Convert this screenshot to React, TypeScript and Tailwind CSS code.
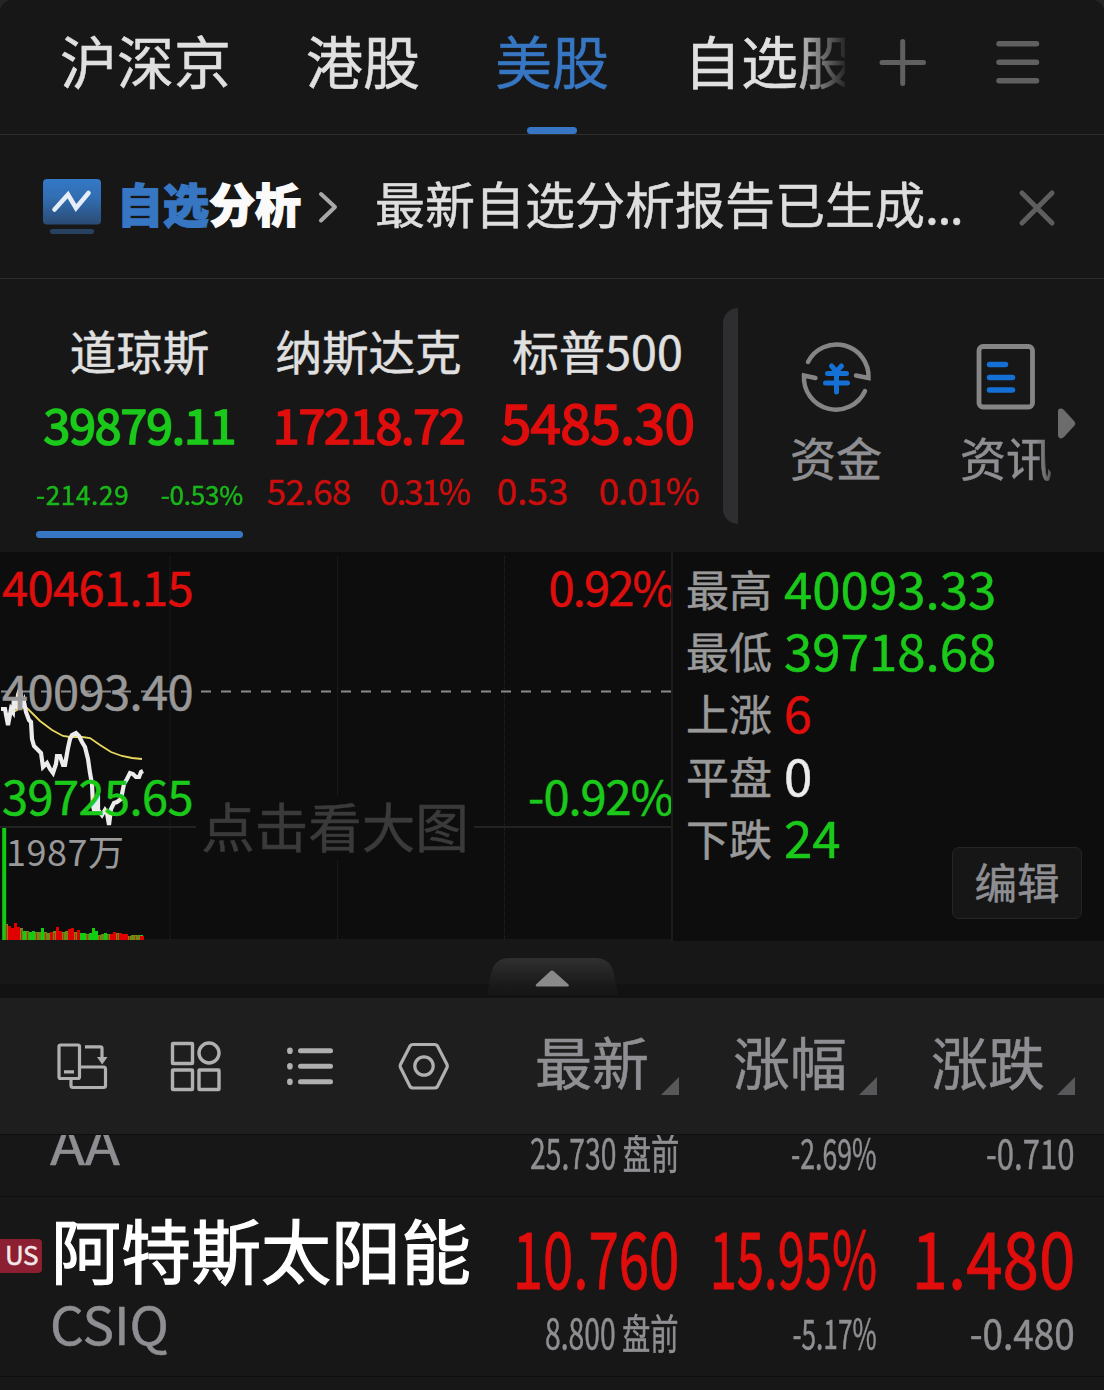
import React from 'react';
import { clsx } from 'clsx';

const UP = 'text-[#e00d0d]';
const DOWN = 'text-[#1ac91a]';

const tabs = ['沪深京', '港股', '美股', '自选股'];

const indices = [
    {
        name: '道琼斯',
        value: '39879.11',
        change: '-214.29',
        percent: '-0.53%',
        color: DOWN,
        active: true,
        valueClass: 'text-[48px] leading-[92px] tracking-[-1px]',
        rowClass: 'text-[26px] leading-[49px]',
        changeClass: 'tracking-[0.7px]',
        percentClass: 'tracking-[-0.2px]',
    },
    {
        name: '纳斯达克',
        value: '17218.72',
        change: '52.68',
        percent: '0.31%',
        color: UP,
        active: false,
        valueClass: 'text-[48px] leading-[92px] tracking-[-1px]',
        rowClass: 'text-[35px] leading-[42px] px-0.5',
        changeClass: 'tracking-[-0.7px]',
        percentClass: 'tracking-[-2.2px] pr-px',
    },
    {
        name: '标普500',
        value: '5485.30',
        change: '0.53',
        percent: '0.01%',
        color: UP,
        active: false,
        valueClass: 'text-[55px] leading-[86px] tracking-[-0.7px]',
        rowClass: 'text-[37px] leading-[40px] pl-[3px] pr-0.5',
        changeClass: '',
        percentClass: 'tracking-[-1.2px]',
    },
];

const stats = [
    { label: '最高', value: '40093.33', color: DOWN },
    { label: '最低', value: '39718.68', color: DOWN },
    { label: '上涨', value: '6', color: UP },
    { label: '平盘', value: '0', color: 'text-[#ececec]' },
    { label: '下跌', value: '24', color: DOWN },
];

const PRICE =
    '1,157 5,157 8,173 11,157 13,160 14,146 17,157 18,143 20,137 22,156 24,150 26,160 29,168 31,170 32,187 34,194 38,198 41,201 43,215 47,211 50,217 53,221 56,212 57,204 60,204 63,213 65,213 68,196 70,187 72,183 76,181 79,184 82,190 85,195 88,207 90,221 92,232 93,254 95,262 98,243 98,258 102,263 105,258 107,261 109,273 111,257 114,251 117,250 121,247 124,232 127,227 130,221 133,222 136,225 139,225 141,220 143,219';

const AVERAGE =
    '10,162 17,158 23,155 27,156 32,161 40,169 52,178 63,184 70,185 82,185 90,186 100,193 111,200 122,204 132,206 142,207';

// one letter + height per volume bar: r = up, g = down, m = mixed
const volumes =
    'm16 r14 r12 r17 r13 m12 g9 m9 g8 g9 m8 m8 g12 m8 m7 r8 m9 r13 r9 m8 m9 r11 r12 m8 r10 g7 g7 m6 g7 g12 g9 m5 m6 g7 m6 r6 r8 m7 r7 r6 r6 m4 m5 m5 m5 g5'.split(' ');

const barColors: Record<string, string> = { r: '#e00000', g: '#12cc12', m: '#6f8a12' };

const columns = ['最新', '涨幅', '涨跌'];

function TopTabs() {
    return (
        <header className="flex h-[135px] border-b border-[#2d2d2d]">
            <div className="flex w-[845px] shrink-0 gap-[75px] overflow-hidden pl-[60px] [mask-image:linear-gradient(to_right,black_790px,transparent_850px)]">
                {tabs.map((tab) => (
                    <div
                        key={tab}
                        className={clsx(
                            'flex shrink-0 flex-col items-center text-[57px] leading-[119px]',
                            tab === '美股' ? 'text-[#3676c2]' : 'text-[#e0e0e0]',
                        )}
                    >
                        <span className="block h-[127px]">{tab}</span>
                        {tab === '美股' && <span className="block h-[7px] w-[50px] rounded-full bg-[#3676c2]" />}
                    </div>
                ))}
            </div>
            <svg className="mt-[36px] ml-[31px] shrink-0" width="54" height="54" fill="none" stroke="#606060" strokeWidth="5" strokeLinecap="round">
                <path d="M6 26.5h41.5M26.7 5.500v42" />
            </svg>
            <svg className="mt-[36px] ml-[62px] shrink-0" width="52" height="54" fill="none" stroke="#606060" strokeWidth="5.500" strokeLinecap="round">
                <path d="M7 7.800h37.500M7 26.300h37.500M7 44.800h37.500" />
            </svg>
        </header>
    );
}

function ReportBanner() {
    return (
        <section className="flex h-[144px] border-b border-[#2d2d2d] pl-[43px]">
            <svg className="mt-[44px] shrink-0" width="58" height="56" fill="none">
                <defs>
                    <linearGradient id="badge" x1="0" y1="0" x2="0" y2="1">
                        <stop stopColor="#3478c6" />
                        <stop offset=".4" stopColor="#326eb3" />
                        <stop offset="1" stopColor="#2a4b74" />
                    </linearGradient>
                </defs>
                <rect width="58" height="45.500" rx="4" fill="url(#badge)" />
                <rect x="7" y="50" width="44" height="5" rx="2.500" fill="#27415f" />
                <path d="M11.500 30.500 25 15.500 33 29 45.500 14" stroke="#e4edf8" strokeWidth="4.600" strokeLinecap="round" />
            </svg>
            <h2 className="ml-[16px] w-[186px] shrink-0 text-[46px] leading-[135px] font-black whitespace-nowrap text-[#3676c2] [-webkit-text-stroke:1.4px]">
                自选<span className="text-[#fafafa]">分析</span>
            </h2>
            <svg className="mt-[54px] ml-[14px] shrink-0" width="24" height="36" fill="none" stroke="#a8a8a8" strokeWidth="4" strokeLinecap="round" strokeLinejoin="round">
                <path d="M4 5l14 13-14 13.500" />
            </svg>
            <p className="ml-[34px] w-[590px] shrink-0 text-[50px] leading-[135px] whitespace-nowrap text-[#dedede]">
                最新自选分析报告已生成<span className="tracking-[-1.500px]">...</span>
            </p>
            <svg className="mt-[50px] ml-[49px] shrink-0" width="46" height="46" fill="none" stroke="#5e5e5e" strokeWidth="5" strokeLinecap="round">
                <path d="M8 8l30 30M38 8L8 38" />
            </svg>
        </section>
    );
}

function IndexStrip() {
    return (
        <section className="flex h-[273px]">
            <div className="flex gap-[22px] pt-[40px] pl-[36px]">
                {indices.map((item) => (
                    <div key={item.name} className={clsx('flex w-[207px] flex-col items-center whitespace-nowrap', item.color)}>
                        <div className="h-[58px] text-[46.500px] leading-[61px] text-[#e0e0e0]">{item.name}</div>
                        <div className={clsx('h-[92px] [-webkit-text-stroke:1.6px]', item.valueClass)}>{item.value}</div>
                        <div className={clsx('flex h-[62px] w-full justify-between opacity-90', item.rowClass)}>
                            <span className={item.changeClass}>{item.change}</span>
                            <span className={item.percentClass}>{item.percent}</span>
                        </div>
                        {item.active && <div className="h-[7px] w-full rounded-full bg-[#3676c2]" />}
                    </div>
                ))}
            </div>
            <div className="mt-[29px] ml-[22px] h-[216px] w-[15px] shrink-0 rounded-l-[15px] bg-[#2e2e30]" />
            <div className="ml-[52px] flex w-[262px] justify-between pt-[57px] text-[46px] leading-[54px] text-[#8f8f93]">
                <div className="flex w-[92px] flex-col items-center">
                    <svg width="80" height="80" fill="none" strokeLinecap="round">
                        <g stroke="#858585" strokeWidth="4.500">
                            <path d="M12 26A32 32 0 0 1 72.500 42L60 39.500" />
                            <path d="M69 55A32 32 0 0 1 8 39.500L19.500 42" />
                        </g>
                        <path d="M35.500 30l5 5.500 5-5.500M31.500 37.500h19M29.500 47h22M40.500 36v20" stroke="#1470d4" strokeWidth="5" />
                    </svg>
                    <span className="mt-[13px]">资金</span>
                </div>
                <div className="flex w-[92px] flex-col items-center [mask-image:linear-gradient(to_right,black_76px,#0008_92px)]">
                    <svg width="80" height="80" fill="none" strokeLinecap="round">
                        <rect x="13" y="10.500" width="53.500" height="60.500" rx="4" stroke="#858585" strokeWidth="4.800" />
                        <path d="M23.500 28.500h16M23.500 41.500h23M23.500 54h23" stroke="#1470d4" strokeWidth="5.500" />
                    </svg>
                    <span className="mt-[13px]">资讯</span>
                </div>
            </div>
            <svg className="mt-[129px] ml-[6px] shrink-0" width="18" height="31">
                <path d="M0 3Q0 0 3 .5 5 .5 6 2L16.500 13.500Q18 15.500 16.500 17.500L6 29Q4 30.500 2 30.500 0 30 0 27Z" fill="#6c6c6c" />
            </svg>
        </section>
    );
}

function IntradayChart() {
    return (
        <div className="relative h-[387px] w-[671px] shrink-0 bg-[#0d0d0d] text-[47px] leading-[60px] tracking-[-0.6px]">
            <svg width="671" height="388" fill="none" className="absolute top-0 left-0">
                <path d="M170 4v384M337.500 4v384M504.500 4v384" stroke="#262626" strokeDasharray="1 1" />
                <path d="M0 275h671" stroke="#222" strokeWidth="2" />
                <path d="M1 139.500h670" stroke="#8a8a8a" strokeWidth="2" strokeDasharray="10 10" />
                <polyline points={AVERAGE} stroke="#e8d860" strokeWidth="1.800" />
                <polyline points={PRICE} stroke="#ececec" strokeWidth="4.200" />
                <path d="M4.200 276v112" stroke="#12cc12" strokeWidth="4" />
                {volumes.map((v, i) => (
                    <rect key={i} x={5 + i * 3} y={388 - Number(v.slice(1))} width="3" height={v.slice(1)} fill={barColors[v[0]]} />
                ))}
                <path d="M142 384v4" stroke="#e00000" strokeWidth="4" />
                <path d="M6.500 373v15M21.500 378v10M27.500 380v8M36.500 381v7M45.500 381v7M54.500 381v7M63.500 381v7M75.500 381v7M87.500 383v5M99.500 384v4M108.500 383v5M117.500 382v6M129.500 384v4M135.500 384v4" stroke="#b83208" />
            </svg>
            <div className={clsx('absolute top-[4px] left-[2px]', UP)}>40461.15</div>
            <div className={clsx('absolute top-[4px] right-[-3px] tracking-[-1.800px]', UP)}>0.92%</div>
            <div className="absolute top-[108px] left-[2px] text-[#999]">40093.40</div>
            <div className="absolute top-[243px] left-[196px] h-[64px] w-[278px] bg-[#0d0d0d] text-center text-[53.500px] leading-[59px] tracking-normal text-[#3a3a3a]">
                点击看大图
            </div>
            <div className={clsx('absolute top-[213px] left-[2px]', DOWN)}>39725.65</div>
            <div className={clsx('absolute top-[213px] right-[-2px] tracking-[-1px]', DOWN)}>-0.92%</div>
            <div className="absolute top-[268px] left-[6px] text-[36px] tracking-[0.5px] text-[#999] [-webkit-text-stroke:0px]">1987万</div>
        </div>
    );
}

function StatsPanel() {
    return (
        <div className="relative h-[389px] flex-1 border-l-2 border-[#1c1c1c] bg-[#0d0d0d] pt-[4px] pl-[13px]">
            {stats.map((s) => (
                <div key={s.label} className="flex h-[62.200px]">
                    <span className="w-[98px] text-[43px] leading-[64px] text-[#999]">{s.label}</span>
                    <span className={clsx('text-[51px] leading-[63px]', s.color)}>{s.value}</span>
                </div>
            ))}
            <button className="absolute top-[295px] right-[22px] h-[72px] w-[130px] rounded-[7px] border border-[#262626] bg-[#161616] pb-[4px] text-[42.500px] leading-[66px] text-[#8f8f93]">
                编辑
            </button>
        </div>
    );
}

function CollapseHandle() {
    return (
        <div className="relative h-[57px]">
            <div className="h-[43px]" />
            <div className="h-[14px] bg-[#121212]" />
            <svg className="absolute top-[17px] left-[487px]" width="132" height="37">
                <defs>
                    <linearGradient id="handle" x1="0" y1="0" x2="0" y2="1">
                        <stop stopColor="#303030" />
                        <stop offset=".75" stopColor="#191919" />
                        <stop offset="1" stopColor="#161616" />
                    </linearGradient>
                </defs>
                <path d="M0 37Q2 27 4 16 7 0 23 0H108Q124 0 127 16 129 27 131 37Z" fill="url(#handle)" />
                <path d="M50 28.500Q47.500 28 49.500 26L63 13.500Q65 11.500 67 13.500L81 26Q83 28 80.500 28.500Z" fill="#8a8a8a" />
            </svg>
        </div>
    );
}

function ListHeader() {
    return (
        <section className="flex h-[137px] border-b border-[#0f0f0f] bg-[#1e1e1e]">
            <div className="flex w-[450px] shrink-0 gap-[56px] pt-[39px] pl-[53px]">
                <svg width="58" height="58" fill="none" stroke="#b0b0b0" strokeWidth="3.200">
                    <rect x="6" y="8" width="20.500" height="33.500" rx="1.500" />
                    <path d="M11 34.800h10M32 9.800h15.500q1.500 0 1.500 1.500V21M28 30h22.500q2 0 2 2V48.500q0 2-2 2H20q-2 0-2-2V42" />
                    <path d="M44 20h10.500L49.200 27.500z" fill="#b0b0b0" stroke="none" />
                </svg>
                <svg width="58" height="58" fill="none" stroke="#b0b0b0" strokeWidth="3.400">
                    <rect x="6.500" y="6.500" width="20" height="20" rx=".5" />
                    <circle cx="43" cy="16" r="10" />
                    <rect x="6.500" y="33" width="20" height="19.500" rx=".5" />
                    <rect x="33" y="33" width="20" height="19.500" rx=".5" />
                </svg>
                <svg width="58" height="58" fill="none" stroke="#b0b0b0" strokeWidth="5" strokeLinecap="round">
                    <path d="M20.500 13.800h30M20.500 29.300h30M20.500 44.700h30" />
                    <path d="M9.900 13.300v1M9.900 28.800v1M9.900 44.200v1" strokeWidth="5.600" />
                </svg>
                <svg width="58" height="58" fill="none" stroke="#b0b0b0" strokeWidth="3.200">
                    <path d="M20 7.500H41.500Q43.500 7.500 44.500 9L54 27.500Q54.700 29 54 30.500L44.500 49.500Q43.500 51 41.500 51H20Q18 51 17 49.500L7.500 30.500Q6.800 29 7.500 27.500L17 9Q18 7.500 20 7.500Z" />
                    <circle cx="31" cy="29" r="9.200" />
                </svg>
            </div>
            <div className="flex flex-1 justify-end gap-[54px] pr-[29px]">
                {columns.map((c) => (
                    <div key={c} className="flex w-[144px] shrink-0 justify-between text-[57px] leading-[125px] text-[#8f8f93]">
                        {c}
                        <svg className="mt-[79px] shrink-0" width="18" height="18">
                            <path d="M18 0v18H0z" fill="#58585a" />
                        </svg>
                    </div>
                ))}
            </div>
        </section>
    );
}

type Cell = { main?: string; sub: string; mainClass?: string; subClass: string };

function StockRow({ name, code, codeClass, cells }: { name?: string; code: string; codeClass: string; cells: Cell[] }) {
    return (
        <div className="flex h-[180px] shrink-0 border-b border-[#0f0f0f]">
            <div className="flex w-[50px] shrink-0 pt-[42px]">
                {name && (
                    <span className="h-[34px] w-[42px] rounded-r-[4px] bg-[#8c1f31] pl-[5px] text-[26px] leading-[30px] tracking-[-0.5px] text-[#f2e8ea]">
                        US
                    </span>
                )}
            </div>
            <div className="w-[430px] shrink-0 text-white">
                <div className="h-[100px] pl-px text-[70px] leading-[104px] whitespace-nowrap [-webkit-text-stroke:1.2px]">{name}</div>
                <div className={clsx('text-[52px] leading-[52px] text-[#8f8f93]', codeClass)}>{code}</div>
            </div>
            <div className="flex flex-1 justify-end pr-[29px]">
                {cells.map((cell, i) => (
                    <div key={i} className="flex w-[198px] shrink-0 flex-col items-end whitespace-nowrap">
                        <span className={clsx('block h-[116px] origin-right text-[79px] leading-[116px] [-webkit-text-stroke:1px]', UP, cell.mainClass)}>
                            {cell.main}
                        </span>
                        <span className={clsx('block origin-right text-[41px] leading-[37px] text-[#8f8f93]', cell.subClass)}>{cell.sub}</span>
                    </div>
                ))}
            </div>
        </div>
    );
}

export default function App() {
    return (
        <div className="h-[1390px] w-[1104px] overflow-hidden bg-[#242424] font-['Noto_Sans_CJK_SC',sans-serif] [-webkit-text-stroke:0.5px]">
            <div className="h-full rounded-t-[12px] bg-[#171717]">
                <TopTabs />
                <ReportBanner />
                <IndexStrip />
                <div className="flex h-[389px]">
                    <IntradayChart />
                    <StatsPanel />
                </div>
                <CollapseHandle />
                <ListHeader />
                <div className="flex h-[62px] flex-col justify-end overflow-hidden">
                    <StockRow
                        code="AA"
                        codeClass="origin-left scale-x-[1.11]"
                        cells={[
                            { sub: '25.730 盘前', subClass: 'scale-x-[0.69]' },
                            { sub: '-2.69%', subClass: 'scale-x-[0.65]' },
                            { sub: '-0.710', subClass: 'scale-x-[0.76]' },
                        ]}
                    />
                </div>
                <StockRow
                    name="阿特斯太阳能"
                    code="CSIQ"
                    codeClass="origin-left scale-x-[1.02]"
                    cells={[
                        { main: '10.760', mainClass: 'scale-x-[0.69]', sub: '8.800 盘前', subClass: 'scale-x-[0.69]' },
                        { main: '15.95%', mainClass: 'scale-x-[0.62]', sub: '-5.17%', subClass: 'scale-x-[0.64]' },
                        { main: '1.480', mainClass: 'scale-x-[0.83]', sub: '-0.480', subClass: 'scale-x-[0.9]' },
                    ]}
                />
            </div>
        </div>
    );
}
